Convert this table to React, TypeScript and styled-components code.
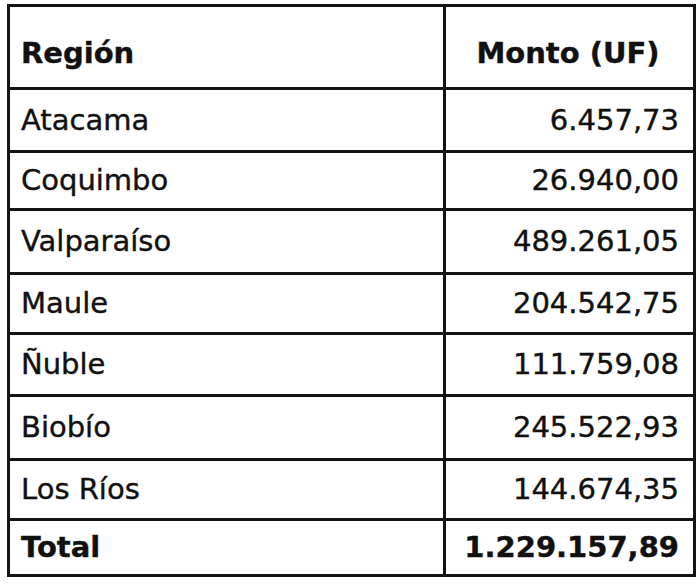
import React from "react";
import styled, { createGlobalStyle } from "styled-components";

const GlobalStyle = createGlobalStyle`
  html, body {
    margin: 0;
    padding: 0;
    background: #ffffff;
  }
  body {
    font-family: "DejaVu Sans", Verdana, sans-serif;
    color: #141414;
  }
`;

const Page = styled.div`
  width: 700px;
  height: 585px;
  padding: 4px 0 0 7px;
  box-sizing: border-box;
  background: #fff;
`;

const Table = styled.table`
  width: 686px;
  border-collapse: collapse;
  border: 3px solid #141414;
  table-layout: fixed;
`;

const Row = styled.tr<{ $h: number }>`
  height: ${(p) => p.$h}px;
`;

const Cell = styled.td<{ $align?: "left" | "right" | "center"; $bold?: boolean }>`
  border: 3px solid #141414;
  padding: 0 14px 0 11px;
  font-size: 29px;
  line-height: 1;
  font-weight: ${(p) => (p.$bold ? 700 : 400)};
  text-align: ${(p) => p.$align ?? "left"};
  vertical-align: middle;
  white-space: nowrap;
  color: #111;
  -webkit-text-stroke: 0.4px #111;
`;

const HeadCell = styled(Cell).attrs({ as: "th" })`
  font-weight: 700;
  padding-top: 12px;
`;

const rows: { region: string; monto: string; h: number }[] = [
  { region: "Atacama", monto: "6.457,73", h: 63 },
  { region: "Coquimbo", monto: "26.940,00", h: 58 },
  { region: "Valparaíso", monto: "489.261,05", h: 64 },
  { region: "Maule", monto: "204.542,75", h: 60 },
  { region: "Ñuble", monto: "111.759,08", h: 62 },
  { region: "Biobío", monto: "245.522,93", h: 64 },
  { region: "Los Ríos", monto: "144.674,35", h: 60 },
];

export default function App() {
  return (
    <Page>
      <GlobalStyle />
      <Table>
        <colgroup>
          <col style={{ width: 436 }} />
          <col style={{ width: 250 }} />
        </colgroup>
        <thead>
          <Row $h={83}>
            <HeadCell $align="left">Región</HeadCell>
            <HeadCell $align="center">Monto (UF)</HeadCell>
          </Row>
        </thead>
        <tbody>
          {rows.map((r) => (
            <Row key={r.region} $h={r.h}>
              <Cell>{r.region}</Cell>
              <Cell $align="right">{r.monto}</Cell>
            </Row>
          ))}
          <Row $h={56}>
            <Cell $bold>Total</Cell>
            <Cell $bold $align="right">
              1.229.157,89
            </Cell>
          </Row>
        </tbody>
      </Table>
    </Page>
  );
}
